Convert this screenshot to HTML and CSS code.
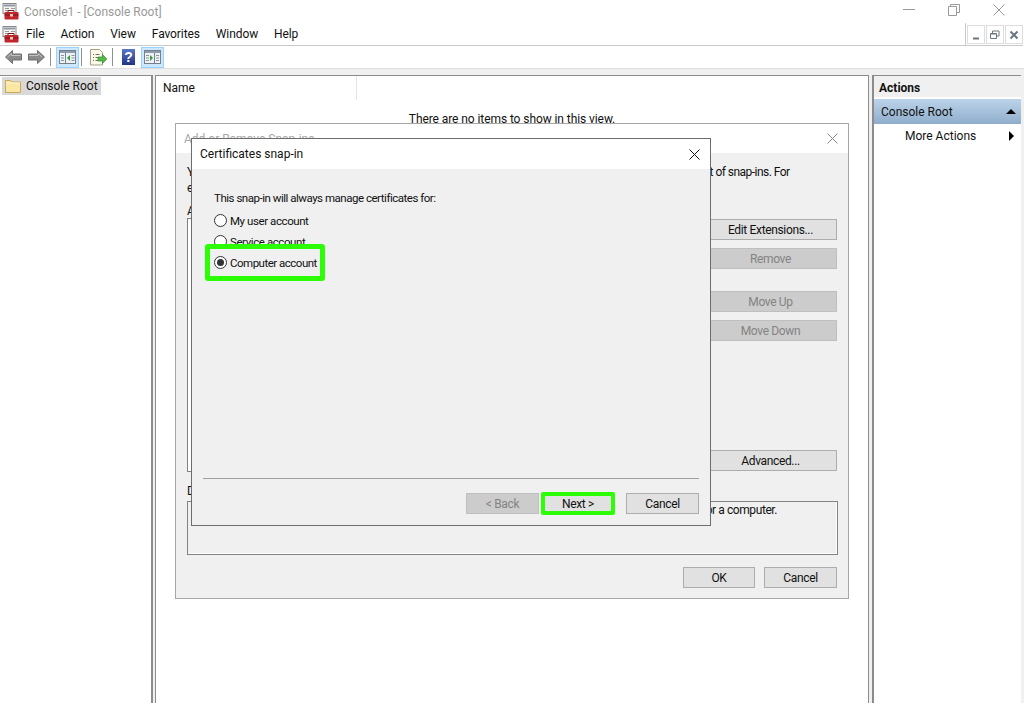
FILE: index.html
```html
<!DOCTYPE html>
<html lang="en">
<head>
<meta charset="utf-8">
<title>Console1 - [Console Root]</title>
<link rel="stylesheet" href="styles.css">
</head>
<body>
<svg class="defs" width="0" height="0" aria-hidden="true">
  <defs>
    <symbol id="mmc" viewBox="0 0 17 17">
      <rect x="1" y="0.500" width="13" height="10" fill="#f4f4f4" stroke="#8a8a8a"/>
      <rect x="2" y="1.500" width="11" height="2" fill="#8f9aa8"/>
      <path d="M3 5.500h4M3 7.500h4M9 5.500h4" stroke="#9a9a9a"/>
      <path d="M6 9V7.500h6V9" fill="none" stroke="#7a1a1a"/>
      <rect x="2.500" y="9" width="14" height="7.500" rx="1" fill="#c0272d"/>
      <rect x="2.500" y="11.500" width="14" height="1" fill="#7e1518"/>
      <rect x="8" y="11" width="3" height="2.500" fill="#f0c8c8"/>
    </symbol>
  </defs>
</svg>
<div class="app">
  <header class="titlebar">
    <svg class="appicon"><use href="#mmc"/></svg>
    <span class="title">Console1 - [Console Root]</span>
    <div class="winctl">
      <svg width="12" height="12" viewBox="0 0 12 12"><path d="M0 5.500h12" stroke="#999"/></svg>
      <svg width="12" height="12" viewBox="0 0 12 12"><path d="M.5 2.500h8v9h-8zM2.500 2.500v-2h9v8h-3" fill="none" stroke="#999"/></svg>
      <svg width="12" height="12" viewBox="0 0 12 12"><path d="M.5.500l11 11M11.500.500l-11 11" stroke="#999"/></svg>
    </div>
  </header>
  <nav class="menubar">
    <div class="menu-main">
      <svg class="appicon"><use href="#mmc"/></svg>
      <ul class="menu">
        <li>File</li><li>Action</li><li>View</li><li>Favorites</li><li>Window</li><li>Help</li>
      </ul>
    </div>
    <div class="mdi">
      <span class="mdi-btn"><svg width="10" height="10" viewBox="0 0 10 10"><path d="M2 8.500h6" stroke="#6c7680" stroke-width="2"/></svg></span>
      <span class="mdi-btn"><svg width="10" height="10" viewBox="0 0 10 10"><path d="M.5 3.500h6v5h-6zM2.500 3V1h6.500v5H7" fill="none" stroke="#6c7680"/><path d="M.5 4h6" stroke="#6c7680"/></svg></span>
      <span class="mdi-btn"><svg width="10" height="10" viewBox="0 0 10 10"><path d="M1.500 1.500l7 7M8.500 1.500l-7 7" stroke="#6c7680" stroke-width="2"/></svg></span>
    </div>
  </nav>
  <div class="toolbar">
    <svg class="tool-arrow" width="17" height="14" viewBox="0 0 17 14"><path d="M.5 7l7-6.500v3.500h9v6h-9v3.500z" fill="#8a8a8a" stroke="#6e6e6e"/><path d="M2.500 7l4-3.500v2h9" fill="none" stroke="#c4c4c4"/></svg>
    <svg class="tool-arrow next" width="17" height="14" viewBox="0 0 17 14"><path d="M16.500 7l-7-6.500v3.500h-9v6h9v3.500z" fill="#8a8a8a" stroke="#6e6e6e"/><path d="M1 5.500h9v-2l4 3.500" fill="none" stroke="#c4c4c4"/></svg>
    <span class="tool-sep"></span>
    <span class="tool-btn on">
      <svg width="17" height="14" viewBox="0 0 17 14"><rect x=".5" y=".5" width="16" height="13" fill="#eef2f5" stroke="#76808a"/><rect x="1" y="1" width="15" height="2" fill="#8e9dad"/><path d="M6.500 3v10" stroke="#76808a"/><path d="M2 5.500h3M2 8h3M2 10.500h3M12.500 5.500h3M12.500 8h3M12.500 10.500h3" stroke="#8b949c"/><path d="M11 5v6L8 8z" fill="#2f9e3a"/></svg>
    </span>
    <span class="tool-sep"></span>
    <svg class="tool-export" width="17" height="17" viewBox="0 0 17 17"><path d="M.5.500h9l3 3v12.500H.5z" fill="#fbf8e8" stroke="#a89f85"/><path d="M3 5.500h1M5.500 5.500h4M3 8.500h1M5.500 8.500h3M3 11.500h1M5.500 11.500h3" stroke="#6f6f6f"/><path d="M8 8h4.500V5.500L16.800 10l-4.300 4.500V12H8z" fill="#56b847" stroke="#2f8f2f" stroke-width=".7"/></svg>
    <span class="tool-sep"></span>
    <span class="tool-help">?</span>
    <span class="tool-btn on last">
      <svg width="17" height="14" viewBox="0 0 17 14"><rect x=".5" y=".5" width="16" height="13" fill="#eef2f5" stroke="#76808a"/><rect x="1" y="1" width="15" height="2" fill="#8e9dad"/><path d="M10.500 3v10" stroke="#76808a"/><path d="M2 5.500h3M2 8h3M2 10.500h3M12 5.500h3M12 8h3M12 10.500h3" stroke="#8b949c"/><path d="M6 5v6l3-3z" fill="#2f9e3a"/></svg>
    </span>
  </div>
  <main class="panes">
    <aside class="tree">
      <div class="tree-item">
        <svg width="16" height="14" viewBox="0 0 16 14"><path d="M.5 13.500V1.500h5l1.500 1.500h8.500v10.500z" fill="#fbe7a4" stroke="#c8a85a"/><path d="M1 4h14" stroke="#fff6d2"/></svg>
        <span>Console Root</span>
      </div>
    </aside>
    <section class="center">
      <div class="listhead"><span class="colhead">Name</span></div>
      <p class="empty">There are no items to show in this view.</p>
    </section>
    <aside class="actions">
      <h2 class="act-title">Actions</h2>
      <div class="act-group"><span>Console Root</span><i class="tri-up"></i></div>
      <div class="act-item"><span>More Actions</span><i class="tri-right"></i></div>
    </aside>
  </main>

  <div class="dialog outer">
    <div class="dlg-head">
      <span class="outer-title">Add or Remove Snap-ins</span>
      <svg width="11" height="11" viewBox="0 0 11 11"><path d="M.5.500l10 10M10.500.500l-10 10" stroke="#8a8a8a"/></svg>
    </div>
    <div class="outer-body">
      <p class="intro">You can select snap-ins for this console from those available on your computer and configure the selected set of snap-ins. For</p>
      <p class="intro second">extensible snap-ins, you can configure which extensions are enabled.</p>
      <p class="avail">Available snap-ins:</p>
      <div class="outer-grid">
        <div class="listbox"></div>
        <div class="side">
          <button class="btn wide">Edit Extensions...</button>
          <button class="btn wide off">Remove</button>
          <button class="btn wide off gap-up">Move Up</button>
          <button class="btn wide off">Move Down</button>
          <button class="btn wide push">Advanced...</button>
        </div>
      </div>
      <p class="desc-label">Description:</p>
      <div class="descbox"><p class="desc">or a computer.</p></div>
      <div class="outer-foot">
        <button class="btn ok">OK</button>
        <button class="btn">Cancel</button>
      </div>
    </div>
  </div>

  <div class="dialog inner">
    <div class="dlg-head inner-head">
      <span>Certificates snap-in</span>
      <svg width="11" height="11" viewBox="0 0 11 11"><path d="M.5.500l10 10M10.500.500l-10 10" stroke="#111"/></svg>
    </div>
    <div class="inner-body">
      <p class="lead">This snap-in will always manage certificates for:</p>
      <div class="radios">
        <label class="radio"><i class="dot"></i><span>My user account</span></label>
        <label class="radio"><i class="dot"></i><span>Service account</span></label>
      </div>
      <div class="mark-row">
        <label class="radio"><i class="dot checked"></i><span>Computer account</span></label>
      </div>
      <div class="inner-foot">
        <button class="btn off">&lt; Back</button>
        <button class="btn next">Next &gt;</button>
        <button class="btn cancel">Cancel</button>
      </div>
    </div>
  </div>
</div>
</body>
</html>
```

FILE: styles.css
```css
* { box-sizing: border-box; }
html, body { margin: 0; height: 100%; overflow: hidden; }
body { font-family: Roboto, "Noto Sans", sans-serif; font-size: 12px; color: #111; background: #fff; }
p, h2, ul { margin: 0; padding: 0; }
.defs { position: absolute; }
.app { position: relative; width: 1024px; height: 703px; display: flex; flex-direction: column; overflow: hidden; }

.titlebar { height: 23px; display: flex; align-items: center; padding-left: 2px; background: #fff; }
.appicon { width: 17px; height: 17px; flex: none; }
.title { margin-left: 5px; color: #999; }
.winctl { margin-left: auto; width: 102px; margin-right: 19px; display: flex; justify-content: space-between; margin-top: -4px; }

.menubar { height: 23px; display: flex; background: #fff; }
.menu-main { width: 966px; display: flex; align-items: center; padding-left: 2px; border-right: 1px solid #c9c9c9; border-bottom: 1px solid #c9c9c9; }
.menu { list-style: none; margin-left: 7px; display: flex; gap: 16px; letter-spacing: -.1px; }
.mdi { display: flex; gap: 1px; padding: 2px 0 1px 1px; border-bottom: 1px solid #c9c9c9; }
.mdi-btn { width: 18px; height: 19px; border: 1px solid #ddd; display: flex; align-items: center; justify-content: center; }

.toolbar { height: 22px; display: flex; align-items: center; padding-left: 5px; background: #fff; }
.tool-arrow.next { margin-left: 6px; }
.tool-sep { width: 1px; height: 18px; background: #8f8f8f; margin-left: 5px; }
.tool-btn { width: 23px; height: 21px; display: flex; align-items: center; justify-content: center; }
.tool-btn.on { margin-left: 5px; background: #cce8ff; border: 1px solid #99d1ff; }
.tool-btn.on.last { margin-left: 6px; }
.tool-btn + .tool-sep { margin-left: 2px; }
.tool-export { margin-left: 8px; }
.tool-help { width: 13px; height: 16px; margin-left: 9px; background: linear-gradient(#5a78c8, #22347f); color: #fff; font: bold 14px/16px "Liberation Sans", sans-serif; text-align: center; }

.panes { flex: 1; display: flex; min-height: 0; padding-top: 6px; background: #f0f0f0; border-top: 1px solid #dedede; padding-right: 3px; }
.tree { width: 153px; background: #fff; border: 1px solid #8c8c8c; border-width: 1px 2px 0 0; padding: 1px 0 0 2px; }
.tree-item { width: 99px; height: 18px; display: flex; align-items: center; gap: 5px; padding-left: 3px; background: #d9d9d9; }
.center { width: 714px; margin-left: 2px; background: #fff; border: 1px solid #8c8c8c; border-width: 1px 1px 0 1px; }
.listhead { height: 24px; display: flex; }
.colhead { width: 201px; padding: 5px 0 0 7px; border-right: 1px solid #e5e5e5; }
.empty { text-align: center; margin-top: 12px; letter-spacing: -.08px; }
.actions { flex: 1; margin-left: 3px; background: #fff; border: 2px solid #8c8c8c; border-width: 1px 0 0 2px; }
.act-title { height: 21px; padding: 4px 0 0 5px; font-size: 12px; font-weight: 700; line-height: 16px; background: #f0f0f0; }
.act-group { height: 25px; margin-top: 2px; display: flex; align-items: center; justify-content: space-between; padding: 0 5px 0 7px; background: linear-gradient(#bcd4ea, #8fadcb); }
.tri-up { width: 0; height: 0; border: 5px solid transparent; border-top: 0; border-bottom-color: #000; }
.act-item { height: 24px; display: flex; align-items: center; justify-content: space-between; padding: 0 7px 0 31px; }
.tri-right { width: 0; height: 0; border: 5px solid transparent; border-right: 0; border-left-color: #000; }

.dialog { position: absolute; background: #f0f0f0; display: flex; flex-direction: column; }
.outer { left: 175px; top: 123px; width: 674px; height: 476px; border: 1px solid #a6a6a6; }
.inner { left: 191px; top: 138px; width: 520px; height: 388px; border: 1px solid #6d6d6d; }
.dlg-head { background: #fff; display: flex; align-items: center; justify-content: space-between; flex: none; }
.outer > .dlg-head { height: 29px; padding: 0 10px 0 8px; }
.outer-title { color: #a8a8a8; }
.inner-head { height: 30px; padding: 0 10px 0 8px; }

.outer-body { flex: 1; padding: 11px 11px 10px 11px; display: flex; flex-direction: column; }
.intro { line-height: 16px; white-space: nowrap; width: 604px; letter-spacing: -.53px; }
.avail { margin-top: 8px; line-height: 14px; }
.outer-grid { display: flex; justify-content: space-between; height: 254px; }
.listbox { width: 510px; background: #fff; border: 1px solid #828282; }
.side { width: 133px; padding: 1px 0; display: flex; flex-direction: column; }
.btn { width: 73px; height: 21px; padding: 0; border: 1px solid #adadad; background: #e1e1e1; color: #111; font: inherit; letter-spacing: -.35px; }
.btn.wide { width: 100%; margin-bottom: 8px; flex: none; }
.btn.off { background: #ccc; border-color: #bfbfbf; color: #838383; }
.btn.gap-up { margin-top: 14px; }
.btn.push { margin-top: auto; margin-bottom: 0; }
.btn.ok { width: 72px; }
.desc-label { margin-top: 12px; line-height: 14px; }
.descbox { height: 54px; width: 651px; margin-top: 3px; background: #f0f0f0; border: 1px solid #828282; box-shadow: inset -1px -1px 0 #fff; padding: 1px 60px 0 4px; }
.desc { white-space: nowrap; text-align: right; letter-spacing: -.42px; }
.outer-foot { margin-top: 12px; display: flex; justify-content: flex-end; gap: 9px; }

.inner-body { flex: 1; position: relative; padding: 21px 11px 0 22px; display: flex; flex-direction: column; }
.lead { line-height: 16px; font-size: 11.5px; letter-spacing: -.48px; }
.radios { margin-top: 6px; display: flex; flex-direction: column; gap: 5px; }
.radio { height: 16px; display: flex; align-items: center; gap: 3px; white-space: nowrap; font-size: 11.5px; letter-spacing: -.42px; }
.radios .radio span { margin-top: 2px; }
.dot { width: 13px; height: 13px; flex: none; border: 1px solid #333; border-radius: 50%; background: #fff; position: relative; }
.dot.checked::after { content: ""; position: absolute; left: 2px; top: 2px; width: 7px; height: 7px; border-radius: 50%; background: #333; }
.mark-row { position: absolute; left: 13px; top: 75px; width: 120px; height: 37px; display: flex; align-items: center; padding-left: 4px; background: #f0f0f0; border: 5px solid #2cff05; border-radius: 3px; }
.mark-row .radio { letter-spacing: -.5px; }
.inner-foot { margin-top: auto; padding-top: 14px; border-top: 1px solid #a0a0a0; margin-left: -11px; height: 47px; display: flex; justify-content: flex-end; }
.inner-foot .next { width: 74px; height: 23px; margin: -1px 11px 0 2px; border: 4px solid #2cff05; border-radius: 2px; }
```
